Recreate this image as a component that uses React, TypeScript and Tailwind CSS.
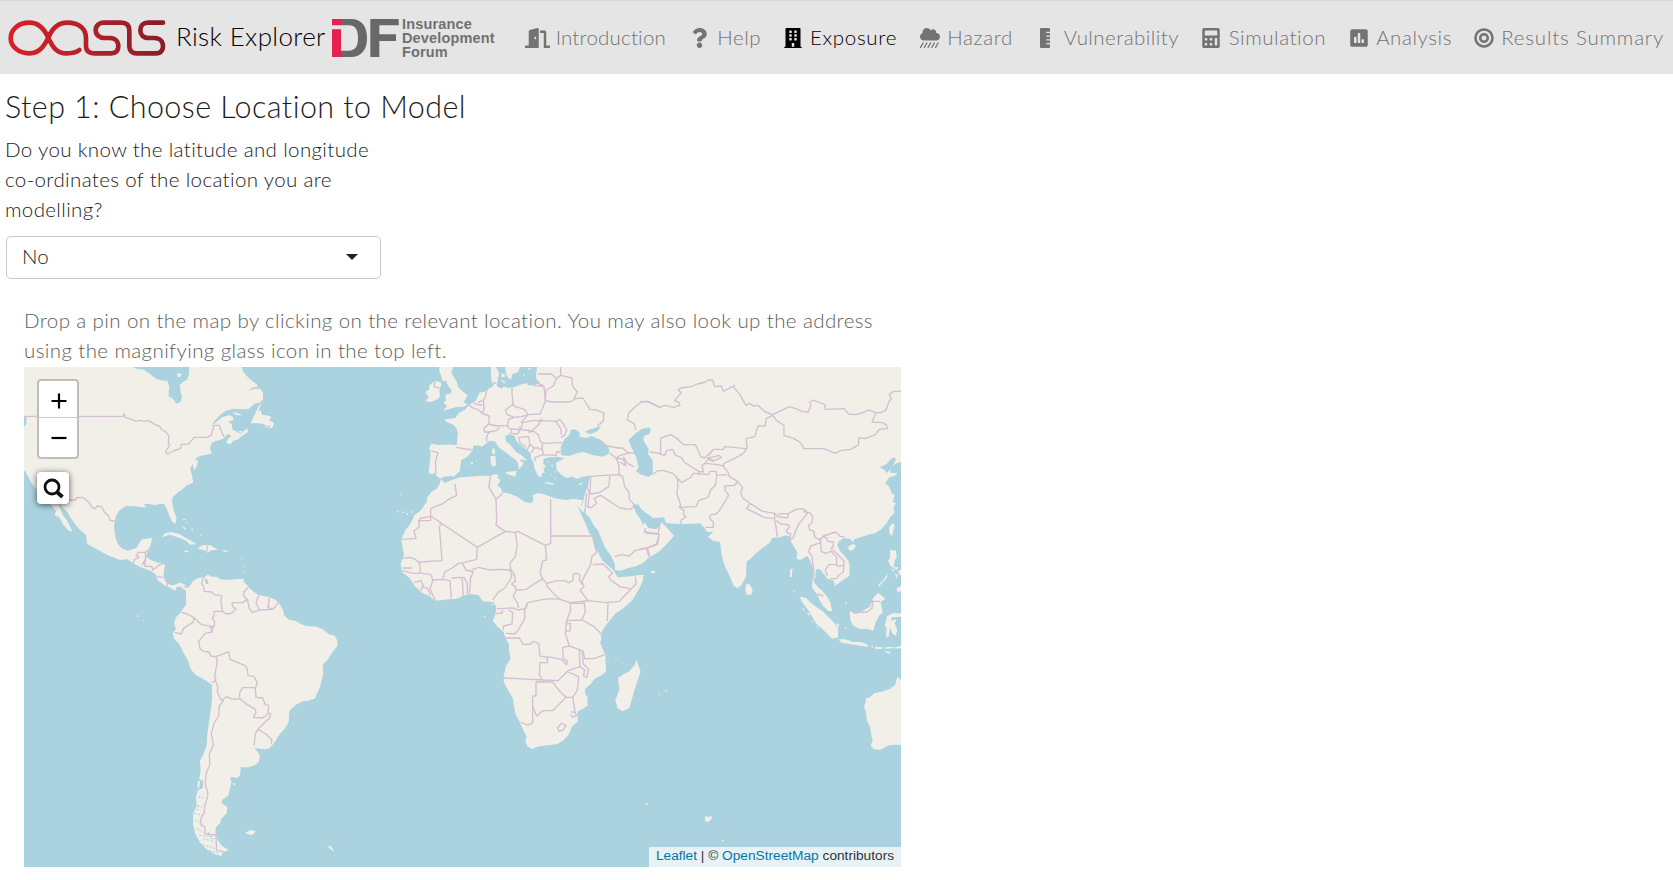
import type { ReactNode } from "react";
import {
  FaBuilding,
  FaBullseye,
  FaCalculator,
  FaCloudShowersHeavy,
  FaDoorOpen,
  FaPoll,
  FaQuestion,
  FaRulerVertical,
} from "react-icons/fa";

function OasisLogo() {
  return (
    <svg className="h-9 w-[158px] shrink-0" viewBox="26 61 474 108" preserveAspectRatio="none" fill="none">
      <defs>
        <linearGradient id="oasis" gradientUnits="userSpaceOnUse" x1="27" y1="150" x2="498" y2="80">
          <stop offset="0" stopColor="#dc2029" />
          <stop offset="0.5" stopColor="#b32029" />
          <stop offset="1" stopColor="#861d26" />
        </linearGradient>
      </defs>
      <path
        d="M240 151C230 159 215 161 202 161C166 161 156 132 147 115C137 92 120 69 90 69C57 69 34 90 34 115C34 140 57 161 90 161C124 161 138 132 148 112C158 88 176 69 204 69C240 69 260 88 260 115V140C260 156 272 161 285 161H335C352 161 357 151 357 140C357 125 347 115 332 115H315C300 115 289 105 289 92C289 78 300 69 312 69H365C382 69 390 78 390 92V140C390 155 400 161 412 161H470C485 161 491 151 491 140C491 125 481 115 466 115H448C432 115 423 105 423 92C423 78 432 69 446 69H491"
        stroke="url(#oasis)"
        strokeWidth="14"
        strokeLinecap="round"
      />
    </svg>
  );
}

function IdfLogo() {
  return (
    <div className="flex items-start">
      <svg className="h-[38px] w-[67px]" viewBox="996 60 201 114">
        <path d="M996 60H1023V79H996ZM996 91H1023V174H996Z" fill="#e8204f" />
        <path
          d="M1023 60H1052C1085 60 1101 82 1101 117C1101 152 1085 174 1052 174H1023V155H1046C1066 155 1074 142 1074 117C1074 92 1066 79 1046 79H1023ZM1111 60H1196V79H1138V106H1188V126H1138V174H1111Z"
          fill="#686868"
        />
      </svg>
      <div className="-mt-px ml-[3px] flex flex-col font-['Liberation_Sans',Arial,sans-serif] text-[14.5px] leading-[13.7px] font-bold tracking-[0.15px] text-[#707070]">
        <span>Insurance</span>
        <span>Development</span>
        <span>Forum</span>
      </div>
    </div>
  );
}

function NavItem({ className, icon, label, active }: { className: string; icon: ReactNode; label: string; active?: boolean }) {
  return (
    <a className={`flex shrink-0 items-center justify-between whitespace-nowrap ${active ? "text-black" : "text-[#737373]"} ${className}`}>
      {icon}
      <span className="pb-[2px] leading-[30px]">{label}</span>
    </a>
  );
}

const land = "#f2efe9";
const water = "#aad3df";

function WorldMap() {
  return (
    <svg className="block h-[500px] w-[877px]" viewBox="24 367 877 500">
      <rect x="24" y="367" width="877" height="500" fill={water} />

      {/* North and Central America */}
      <g transform="translate(20 300) scale(0.33333)">
        <path
          fill={land}
          d="M12 201L338 201L350 207L372 209L382 217L395 226L408 236L422 241L442 243L448 262L446 276L446 290L455 293L462 301L470 311L482 305L486 290L482 276L479 256L488 246L500 240L507 222L507 201L665 201L670 215L680 228L697 243L712 254L712 262L700 262L684 272L706 266L722 266L729 280L729 300L718 308L702 312L686 327L660 328L640 326L617 333L600 345L586 360L572 380L590 365L606 352L628 345L640 352L638 362L625 364L636 374L636 388L652 396L662 402L682 384L684 396L662 410L655 418L640 422L632 433L620 430L620 422L634 406L622 403L612 414L600 420L584 424L574 430L570 446L576 460L562 464L548 466L532 472L525 478L534 482L530 500L522 512L518 492L510 506L516 525L520 548L500 556L488 568L472 578L458 592L456 604L460 628L470 655L466 672L455 663L448 646L438 622L432 612L418 612L405 616L390 612L372 612L378 622L362 622L345 619L318 618L297 632L287 650L282 680L286 710L292 730L304 744L322 752L350 744L358 728L366 718L397 714L392 734L384 752L378 770L388 778L412 788L436 790L432 812L430 832L438 846L450 855L462 856L478 848L492 852L502 862L496 872L484 860L470 860L466 872L452 864L434 856L412 840L408 824L392 812L362 802L340 790L322 778L300 780L262 765L225 745L202 732L198 705L180 690L165 672L150 650L140 632L130 625L115 608L122 628L128 645L140 660L157 694L148 694L130 674L118 652L104 646L108 634L92 612L52 600L50 570L34 548L22 524L12 510Z"
        />
        <path
          fill={land}
          d="M725 308L716 318L702 348L692 370L718 370L740 376L734 384L750 376L748 386L758 382L762 368L748 362L754 350L738 346L726 344L722 330L714 335ZM636 338L652 338L666 346L652 346ZM655 393L670 394L660 400ZM472 220L486 222L480 232L472 230ZM424 712L436 700L454 696L478 702L498 714L530 732L510 734L498 722L480 714L450 704ZM532 746L548 736L572 736L594 750L576 750L562 758L552 750ZM492 752L506 752L506 756L494 757ZM608 750L624 752L620 756L608 754ZM486 676L498 686L494 690ZM500 664L504 668L500 670ZM484 656L498 658L494 661ZM514 684L520 690L516 692ZM540 702L546 708L542 708ZM664 770L668 774L664 776ZM672 794L676 800L672 802ZM668 812L672 814L670 818ZM660 838L672 836L670 842Z"
        />
        <path fill={water} d="M12 350L20 352L19 372L12 380Z" />
        <g fill="none" stroke="#d3bfd0" strokeWidth="4" strokeLinejoin="round">
          <path d="M12 349H310L313 341L315 352L336 359L348 364L362 361L372 364L386 362L404 373L418 378L426 390L436 394L447 408L445 430L450 434L436 456L444 462L460 453L482 445L484 433L505 432L523 412L563 412L574 404L582 376L598 376L604 394L612 410" />
          <path d="M120 600H166L172 592L190 593L208 608L216 623L226 626L232 618L244 619L254 638L264 645L270 660L288 665M340 790L344 778L358 772L348 768L356 757L376 757L384 750M376 757L377 776L366 796M377 778L374 798L396 800L398 810L420 793L436 790M410 830L428 832M440 838L442 858M562 738L560 756M492 862L500 858" />
        </g>
      </g>

      {/* South America */}
      <g transform="translate(20 570) scale(0.33333)">
        <path
          fill={land}
          d="M498 58L506 52L520 32L535 24L550 22L562 10L572 20L590 20L600 28L625 30L645 28L668 26L672 36L684 48L690 56L715 76L745 80L768 90L780 104L790 122L792 136L808 150L825 152L848 164L862 168L890 170L908 178L925 192L945 198L952 212L952 228L936 248L924 268L908 284L910 310L904 334L900 352L884 386L866 392L848 394L828 404L808 422L806 456L794 476L778 494L762 520L746 536L735 538L704 534L712 544L720 558L716 576L704 586L684 592L662 592L660 618L648 624L630 620L634 636L630 656L624 678L608 688L604 698L622 712L620 730L604 746L600 760L588 772L586 790L592 808L606 828L626 840L606 848L604 858L584 852L560 838L542 820L526 792L519 762L520 730L530 708L528 680L534 660L548 655L550 632L538 628L542 600L540 572L550 554L560 526L562 492L568 450L574 410L576 380L576 344L552 328L528 316L512 298L504 272L488 244L478 222L462 206L458 190L468 178L462 160L468 142L480 130L488 118L498 104Z"
        />
        <path fill={land} d="M534 634L540 632L538 654L532 652ZM674 790L692 780L708 784L696 796ZM920 826L934 830L942 842L934 840ZM636 640L646 640L644 647ZM348 136L356 138L354 142ZM368 149L372 150L370 153Z" />
        <path d="M522 700L545 712M522 730L546 736M526 750L548 764M528 774L552 788M538 796L576 800M550 806L584 816M548 824L588 836M568 842L598 850M534 680L550 684M564 786L572 806L586 806M536 706L532 722" fill="none" stroke={water} strokeWidth="3" strokeDasharray="7 4" />
        <path fill={water} d="M557 24L564 32L565 42L558 42L555 34Z" />
        <g fill="none" stroke="#d3bfd0" strokeWidth="4" strokeLinejoin="round">
          <path d="M566 10L550 22L545 40L550 48L553 64L574 66L584 74L606 77L602 92L608 125L620 132L634 130L648 117L638 110L636 98L668 98L682 88L672 80L672 66L684 52M682 88L688 116L698 127L718 120L758 118L764 112L774 98M718 120L708 98L716 76M758 118L744 112L748 82M608 124L582 124L582 138L576 144L584 154L583 168L570 172L578 180L573 186L580 170L545 164L522 143L502 132L484 127M522 143L520 156L490 176L484 192L464 187M578 186L556 190L536 214L540 236L550 244L568 246L572 258L588 260L626 246L630 268L674 286L682 296L684 316L702 320L712 338L706 354L708 382L728 384L736 404L746 406L744 432L728 444L700 442L708 428L706 418L682 404L660 386L638 388L620 380L606 390M588 260L592 276L584 318L588 330L576 338M584 328L594 350L592 366L602 388L610 392L598 408L596 438L582 460L574 490L580 524L568 552L569 586L558 612L556 642L564 674L554 710L552 730L542 746L543 766L554 770L556 792L588 795L590 842L610 844M658 382L660 364L668 353L704 353M744 430L752 430L750 442L714 478L706 492L702 526M714 478L738 492L756 510L754 522" />
        </g>
      </g>

      {/* Southern Africa */}
      <g transform="translate(460 560) scale(0.33333)">
        <path
          fill={land}
          d="M68 90L550 45L548 62L535 90L515 122L490 144L466 160L445 186L432 204L422 222L424 240L420 246L428 268L436 284L438 335L424 346L404 356L390 374L375 386L376 402L383 412L382 438L352 455L354 484L336 500L325 526L308 542L292 552L266 556L240 558L215 567L202 558L196 544L200 530L188 506L178 484L168 466L162 440L158 414L144 390L131 365L132 344L138 318L152 296L146 268L148 256L138 236L130 215L114 200L98 184L106 164L110 140L102 124Z"
        />
        <path fill={land} d="M530 300L536 318L542 336L536 350L520 402L508 444L488 454L472 444L466 420L478 390L474 354L492 342L508 334L524 314ZM574 35L586 36L582 40L574 39ZM72 168L76 168L76 172L72 171ZM94 130L100 132L96 138ZM466 295L471 298L467 299ZM485 305L489 308L485 309ZM616 390L623 392L618 396ZM594 401L601 403L596 406Z" />
      </g>

      {/* Europe, Middle East and North Africa */}
      <g transform="translate(390 360) scale(0.33333)">
        <path
          fill={land}
          d="M441 21L438 44L440 60L450 66L434 76L415 76L410 69L390 74L376 80L358 84L340 80L335 86L320 78L322 68L324 54L328 40L318 21L303 21L303 46L308 80L296 86L290 94L268 98L262 112L256 124L238 134L224 150L206 160L196 174L180 176L166 178L166 184L180 190L192 196L200 206L204 222L200 256L184 254L165 254L146 255L124 251L118 262L122 282L116 340L134 343L150 356L162 350L180 348L192 350L200 342L210 332L212 312L214 300L232 290L246 274L250 258L264 256L276 260L298 243L314 244L326 262L350 280L364 290L378 300L384 312L386 328L396 318L402 308L390 302L394 298L412 304L398 288L378 276L362 256L348 244L346 228L358 222L374 228L380 244L398 260L412 270L422 280L424 298L430 306L434 326L444 348L454 352L456 338L464 340L460 324L470 320L458 310L466 298L482 292L500 290L524 294L508 304L498 308L500 330L514 344L530 354L546 350L562 356L580 350L600 346L596 370L590 388L582 414L575 440L582 458L584 440L588 448L586 460L600 475L612 498L624 510L632 532L646 564L665 590L674 612L675 630L690 632L716 624L740 618L758 610L775 594L792 584L810 572L822 560L835 547L852 527L835 508L815 487L808 500L798 508L775 504L764 486L760 496L748 472L740 462L728 434L745 433L754 448L770 460L790 474L822 472L828 490L870 492L930 490L930 21Z"
        />
        <path
          fill={land}
          d="M148 21L190 21L184 38L192 52L200 64L204 80L222 98L232 104L228 116L220 126L232 134L222 140L196 142L176 148L158 152L172 138L160 128L168 122L166 104L184 100L184 88L176 80L168 62L158 64L154 48L148 34ZM134 64L152 66L154 76L148 86L150 106L146 116L124 126L106 124L116 112L106 96L118 88L118 76ZM345 21L390 21L384 36L368 42L362 60L350 48ZM334 42L344 40L344 52L334 52ZM330 58L348 66L342 70ZM400 40L404 44L400 50ZM412 24L426 26L418 30ZM308 264L314 266L316 280L310 284L306 276ZM302 288L316 288L318 316L308 320L302 306ZM346 336L380 332L376 350L350 342ZM466 366L492 370L490 374L466 370ZM562 374L578 366L574 374ZM240 308L250 306L248 314ZM256 302L262 304L258 306ZM226 316L230 318L226 320ZM30 400L36 402L32 405ZM20 452L26 454L22 458ZM36 454L44 456L38 460ZM48 460L56 458L52 466ZM62 456L70 452L66 460ZM783 634L794 634L792 639L784 639ZM496 352L500 354L496 360ZM474 324L480 326L474 328Z"
        />
        <path
          fill={land}
          d="M152 358L164 369L186 360L210 352L240 350L270 347L300 348L314 343L326 345L322 354L332 360L322 376L334 386L336 397L362 402L382 410L404 426L424 430L430 420L428 406L444 400L460 402L482 410L500 416L530 420L550 416L578 421L574 434L582 456L576 454L562 436L572 460L580 476L598 518L608 530L614 564L624 576L636 600L656 618L670 630L686 656L704 658L730 648L760 644L758 662L745 690L725 722L700 744L676 760L655 786L640 800L320 800L318 740L310 726L278 724L266 706L244 702L222 706L200 716L178 718L135 722L118 708L96 698L74 678L60 655L36 636L32 610L42 584L34 540L46 510L60 494L74 464L92 452L110 425L112 412L124 396L140 386L150 370Z"
        />
        <path
          fill={water}
          d="M542 210L556 208L570 218L568 230L590 234L604 228L634 240L656 262L658 280L640 290L610 286L580 276L560 280L538 288L514 286L512 262L524 236L538 226ZM586 214L602 208L634 198L622 214L604 222L590 220ZM756 206L778 202L783 210L778 222L762 228L760 240L776 268L774 282L788 300L789 342L776 350L754 344L738 334L746 320L738 290L724 262L716 240L734 222ZM304 72L316 66L320 68L306 78Z"
        />
        <path fill={water} d="M460 296L480 292L498 292L496 306L498 330L510 344L496 346L480 334L468 322L462 310Z" />
        <path fill={land} d="M482 314L490 316L486 320ZM472 306L478 304L476 310ZM494 332L498 336L494 338ZM480 342L486 344L482 346Z" />
        <g fill="none" stroke="#d3bfd0" strokeWidth="4" strokeLinejoin="round">
          <path d="M290 94L286 110L280 122L282 148L276 160L298 168L296 192L282 204L284 216L298 216L290 228L290 246M238 136L252 146L264 148L276 160M252 130L276 136M264 128L280 120M366 84L366 104L370 132L346 150L352 164L372 172L394 170L414 164L404 148L376 140L366 132M414 164L450 162L458 144L466 122L462 80L430 76M456 174L450 184L458 182L428 182L398 188L392 210L358 206L352 196L356 178L372 172M296 192L320 198L352 196M298 216L320 212L328 202M392 188L400 180L414 164M450 184L444 196L426 212L400 210L386 202M458 182L498 184L510 178L520 192L530 210L524 226L512 232M498 184L512 206L514 224M366 206L362 220L382 222L390 212M386 232L416 230L420 252L412 268M386 232L390 248L408 262M414 216L432 214L446 226L450 242L458 250L516 248M458 250L456 262L460 284L436 292M420 252L432 264L444 264L458 270M432 264L424 278M460 284L498 286L500 276L512 276M436 290L434 304M466 122L486 126L540 126L556 116L578 114L600 148L620 150L642 160L640 182L622 198M466 120L468 90L490 78L498 58L512 46L546 54L548 80L562 96L552 116M444 42H484L498 54M430 66L460 76M512 21V46" />
          <path d="M122 272L144 278L136 306L138 340L128 344M198 262L246 270M134 66L132 80L148 84M600 350L640 346L688 344L686 314L680 296L660 280M634 254L684 264L698 264L714 280L690 286L680 294M682 294L700 298L708 318L690 306M700 290L712 310L732 320M714 278L736 280M738 210L732 190L712 180L716 160L734 142L756 124L780 126L810 142M602 350L600 402M660 348L656 380L628 398L600 402M590 400L586 438L602 444L620 430L612 416L632 406L690 444L722 448L734 436L718 418L716 396L704 380L698 350L688 344M592 380L598 398L594 440M766 504L764 516L806 522M674 590L694 584L718 588L734 572L772 564L780 590M770 564L802 554L808 522M195 372L200 406L176 418L160 430L122 446V482M302 348L296 380L318 418L338 400M318 418L320 480L318 496L346 514L376 518L384 514L466 556M482 418V550L466 556L470 600L458 602L450 640L458 656L426 676L408 688L380 690M482 528H608M122 468L262 562L346 514M262 562L260 598L220 608L206 610L186 624L164 636L158 658M376 518L382 556L376 590L360 610L362 628L372 640L376 664L364 672L376 680M148 498L156 602L86 606M148 492L156 498M122 482H86L88 500L72 512L78 536L36 538M122 470L92 474L86 488M36 596L60 592L76 598L88 610L92 640L70 640L36 632M38 624L66 624M96 640L124 644L128 664L120 686L126 700L136 722M72 668L92 662L100 676L92 692M100 682L112 684L122 706M128 660L158 658L180 662L184 716M184 654L216 652L220 706M216 608L228 630L250 636L242 652L238 702M220 650L232 670L232 702M244 630L266 622L300 630L330 628L360 630L366 646L360 660L344 684L324 698L308 720M376 680L378 690L370 710L382 728L386 744M458 656L470 670L472 680L496 706L510 718L540 728M510 718L484 716L460 718L414 728L406 746L384 750L368 744L320 746M472 670L500 662L524 662L536 668L548 662L550 642L560 640L570 644L568 660L578 674M608 530L620 578L606 588L602 614L588 640L576 664L582 680L570 690L594 722L650 728L688 724L738 672L736 650M608 614L640 612L668 640L656 650L662 660L690 680L720 686M540 728L578 724L594 722M654 728L652 784" />
        </g>
      </g>

      {/* Central and southern African borders */}
      <g transform="translate(460 560) scale(0.33333)">
        <g fill="none" stroke="#d3bfd0" strokeWidth="4" strokeLinejoin="round">
          <path d="M128 150L126 160L108 160M146 150L158 158L156 192L130 198L130 210M202 130L194 150V176L176 208L164 222L138 220M138 234H178L190 254L212 252L220 244L236 250L240 288L262 292L262 308H240L238 344L248 360M330 130L332 150L320 182L316 220L328 258M330 130L372 130M372 122L376 154L366 180L320 182M366 180L402 200L422 220M318 192L332 190L330 212L318 214M328 258L308 262L310 296L322 304L320 314L304 298L262 290M328 258L356 268L370 274L374 296L402 296L434 284M358 270L360 320L324 332L294 362L248 360L132 354M366 276L370 312L386 328L380 352L370 348L374 330L360 320M324 336L356 350L352 390L338 412L318 412L298 392L276 364M228 366H276M228 366V408H218V488L204 496L182 486M218 440L230 468L248 452L278 452L318 412M338 412L346 460M334 456L344 456L350 466L338 472L332 464M292 504L304 490L318 496L310 510L298 514L292 504" />
        </g>
      </g>

      {/* South and East Asia */}
      <g transform="translate(640 360) scale(0.33333)">
        <path
          fill={land}
          d="M100 21H784V306L766 311L752 324L750 338L772 340L768 346L748 352L736 370L748 380L754 398L764 406L758 426L768 430L760 444L764 458L750 472L740 490L724 508L704 520L684 524L662 532L642 538L640 548L632 538L612 534L598 542L592 556L600 572L614 588L626 604L629 620L628 648L612 658L596 670L584 678L582 662L562 656L550 640L540 628L528 628L526 650L520 664L534 682L548 694L560 708L570 726L577 754L564 752L550 738L540 722L532 704L516 682L518 650L520 630L512 604L502 588L480 600L470 596L472 576L462 560L452 544L448 528L438 526L420 532L396 534L390 548L370 562L348 580L330 598L320 604L318 650L304 676L292 685L280 676L270 650L256 622L246 590L240 546L220 542L204 530L220 516L202 516L192 502L180 490L100 490Z"
        />
        <path fill={water} d="M720 322L740 312L752 298L762 292L768 298L760 314L752 326L740 340L734 330Z" />
        <path
          fill={land}
          d="M320 670L330 674L338 690L334 704L320 704L316 688ZM624 560L638 552L648 556L640 570L628 572ZM748 502L758 490L764 496L756 528L748 520ZM750 570L768 572L770 590L764 602L762 622L776 622L770 630L752 618L744 602L750 594ZM756 624L764 632L758 634ZM766 640L774 646L768 656ZM774 632L784 630L784 646L778 644ZM768 688L784 676V690L776 698ZM744 640L740 654L716 680L714 676L730 660ZM480 712L496 714L516 732L544 752L558 768L574 790L592 804L594 832L576 836L548 808L528 790L506 752L488 728ZM0 648L8 644L6 664L0 680ZM34 634L44 636L42 639L34 639ZM452 628L456 628L456 652L450 650ZM616 726L622 728L618 732ZM460 690L464 694L460 696Z"
        />
        <g fill="none" stroke="#d3bfd0" strokeWidth="4" strokeLinejoin="round">
          <path d="M0 126L22 124L58 142L76 136L100 142L120 136L116 126L104 122L124 98L114 90L122 84L154 80L172 72L198 66L202 60H218L224 80L244 78L250 94L284 76L280 80L300 104L318 136L328 130L340 138L354 136L376 156L398 164L448 140L468 146L486 154L504 156L512 138L510 126L520 120L554 134L556 148L612 146L626 162L648 164L674 156L686 150L708 158L722 158L738 150L748 122L754 118L748 102L762 94H784" />
          <path d="M398 166L410 182L432 196V226L462 236L482 248L492 266L552 266L586 280L602 272L632 268L656 254V234L676 236L706 224L718 208L742 206L740 196L728 188L696 186L708 158M398 166L378 176L376 198L354 198L344 230L318 236L322 262L310 280L294 290L282 296L252 310L250 320L264 336L268 350L292 364L308 382L302 398L308 414L330 430L320 446L372 472L406 476M62 284V234L92 224L112 236L130 254L166 254L174 270L182 290L194 294L222 268H250L254 260L320 266M30 276L48 278L74 286L80 272L98 268L106 286L124 292L132 306L176 334L178 342L160 340L150 354L124 368L114 356L98 340L72 332L54 332L40 342M112 354L114 378L110 400L122 434L118 442L168 440L176 422L204 412L212 390L226 376L230 346L262 344M178 342L206 344L210 334L228 334L230 346M176 334L190 336L186 316L196 310L234 314L250 318M194 310L204 298L222 304M202 294L226 290L236 286L244 292L224 302L202 296M218 270L206 286M292 366L284 376L254 378L256 392L266 406L238 452L228 462L212 464L208 474L220 486V502H196M118 442L132 452L130 464L138 470L124 480L122 492M330 430L368 454L404 460V482L408 500L412 530M404 460L414 470L442 474L446 460L414 462M408 482L424 492L446 494L448 502L438 512L444 520L452 520L450 544M446 460L468 448L490 446L494 456L510 458L518 470L516 488L506 496L508 508L522 514L524 532L540 540L550 528L588 516L602 530H614M494 448L502 460L478 490L466 514L460 534L450 540M540 534L542 548L512 558L506 574L516 590L520 620L522 640L518 660M542 550L544 574L556 580L574 574L590 592V614H566L556 630L562 648M548 530L560 534L564 544L580 546V558L574 566L598 588L612 604L610 636L596 646L590 656H570M590 618L610 616M532 702L550 708M14 510L20 520L54 522L60 490M0 568L20 564L50 552L56 528M20 566L26 590" />
        </g>
      </g>

      {/* Indonesia and Australia */}
      <g transform="translate(780 540) scale(0.33333)">
        <path
          fill={land}
          d="M60 171L78 174L92 188L112 204L128 214L146 232L158 244L174 262L174 292L160 294L142 276L118 254L100 224L82 202L66 184ZM174 298L196 298L220 306L244 306L266 316L260 320L222 314L186 308ZM210 214L222 218L238 218L252 210L270 200L278 176L294 158L316 176L302 186L308 218L298 226L286 250L280 272L262 266L240 268L218 256L210 236ZM322 228L338 220H364V230L336 232L332 242L350 238L344 250L352 272L346 288L336 278L330 262L326 290L318 290L320 262L314 258ZM66 204L74 208L70 212ZM82 216L90 222L86 228ZM96 240L102 246L98 248ZM110 256L116 262L112 266ZM168 250L178 252L176 262ZM194 260L200 262L196 266ZM196 186L200 188L198 192ZM272 320L280 318L278 324ZM284 320L308 322L306 327H286ZM314 322L340 320V325L314 326ZM344 322L364 318V324L346 326ZM312 332L330 336L332 342L320 338ZM42 154L46 156L42 158ZM32 88L38 84L34 108L30 104Z"
        />
        <path fill={land} d="M364 420L354 410L348 422L346 434L330 446L310 454L284 460L266 474L258 474L256 490L252 498L258 516L260 540L270 560L274 586L278 600L272 618L282 628L300 630L322 618L340 614L364 615Z" />
        <path d="M216 214L224 220L242 216L262 216L276 204L278 186L264 184M276 184H300M274 178L280 188" fill="none" stroke="#d3bfd0" strokeWidth="4" strokeLinejoin="round" />
      </g>

      <path fill={land} d="M705 816L708 817L712 816L711 820L708 822L705 821ZM645 803.5L648 803.5L648 804.5L645 804.5ZM721.5 840L723.5 840L724 842Z" />
    </svg>
  );
}

function MapControls() {
  return (
    <div className="absolute top-[12px] left-[13px] flex flex-col items-start gap-[13px]">
      <div className="flex h-[80px] w-[42px] flex-col rounded-[4px] border-2 border-[#c1beba] bg-white text-black">
        <button className="flex h-[37px] items-center justify-center border-b border-[#ccc] pt-[3px] pl-[2px]" aria-label="Zoom in">
          <svg className="size-4" viewBox="0 0 16 16">
            <path d="M0.5 8H15.5M8 0.5V15.5" stroke="black" strokeWidth="2.2" />
          </svg>
        </button>
        <button className="flex h-[39px] items-center justify-center pl-[2px]" aria-label="Zoom out">
          <svg className="size-4" viewBox="0 0 16 16">
            <path d="M0.5 8H15.5" stroke="black" strokeWidth="2.2" />
          </svg>
        </button>
      </div>
      <button className="flex size-8 items-center justify-center rounded-[4px] bg-white shadow-[0_1px_6px_rgba(0,0,0,0.65)]" aria-label="Search">
        <svg className="size-[21px]" viewBox="0 0 21 21" fill="none" stroke="#111">
          <circle cx="9" cy="9" r="7" strokeWidth="2.8" />
          <path d="M14 14L19.5 19" strokeWidth="3.8" />
        </svg>
      </button>
    </div>
  );
}

export default function App() {
  return (
    <div className="h-[880px] w-[1673px] overflow-hidden bg-white font-[Lato,sans-serif] text-[20.5px] font-light text-[#1c1c1c]">
      <header className="flex h-[74px] items-center border-t border-[#d3d9de] bg-[#e5e5e5] pl-2">
        <OasisLogo />
        <span className="ml-[10px] w-[150px] pb-[4px] text-[26px] leading-9 tracking-[0.36px] whitespace-nowrap text-black">Risk Explorer</span>
        <div className="ml-[6px] w-[165px] pt-1">
          <IdfLogo />
        </div>
        <nav className="ml-[28px] flex items-center">
          <NavItem className="w-[141px] tracking-[0.2px]" icon={<FaDoorOpen className="h-5 w-[25px]" />} label="Introduction" />
          <NavItem className="ml-[26px] w-[69px] tracking-[0.5px]" icon={<FaQuestion className="h-5 w-[15px]" />} label="Help" />
          <NavItem className="ml-[23px] w-[113px] tracking-[0.68px]" icon={<FaBuilding className="h-5 w-[18px]" />} label="Exposure" active />
          <NavItem className="ml-[23px] w-[93px] tracking-[0.6px]" icon={<FaCloudShowersHeavy className="size-5" />} label="Hazard" />
          <NavItem className="ml-[27px] w-[139px] tracking-[0.45px]" icon={<FaRulerVertical className="h-5 w-[10px]" />} label="Vulnerability" />
          <NavItem className="ml-[23px] w-[124px] tracking-[0.55px]" icon={<FaCalculator className="h-5 w-[18px]" />} label="Simulation" />
          <NavItem className="ml-[24px] w-[102px] tracking-[0.58px]" icon={<FaPoll className="h-5 w-[18px]" />} label="Analysis" />
          <NavItem className="ml-[22px] w-[190px] tracking-[0.8px]" icon={<FaBullseye className="size-5" />} label="Results Summary" />
        </nav>
      </header>
      <main className="flex flex-col items-start pt-[14px] pl-[6px]">
        <h1 className="-ml-px text-[30.5px] leading-9 tracking-[0.42px] whitespace-nowrap">Step 1: Choose Location to Model</h1>
        <p className="mt-[10px] -ml-px flex flex-col leading-[30px] tracking-[0.36px] whitespace-nowrap">
          <span>Do you know the latitude and longitude</span>
          <span>co-ordinates of the location you are</span>
          <span>modelling?</span>
        </p>
        <div className="mt-[12px] flex h-[43px] w-[375px] items-center justify-between rounded-[5px] border border-[#c8c8c8] pr-[22px] pl-[15px]">
          <span className="pb-[2px]">No</span>
          <svg className="mb-px h-[6px] w-[12px]" viewBox="0 0 12 6">
            <path d="M0 0H12L6 6Z" fill="#222" />
          </svg>
        </div>
        <section className="mt-[26px] ml-[18px]">
          <p className="mb-[2px] flex flex-col leading-[30px] tracking-[0.4px] whitespace-nowrap text-[#5e5e5e]">
            <span>Drop a pin on the map by clicking on the relevant location. You may also look up the address</span>
            <span>using the magnifying glass icon in the top left.</span>
          </p>
          <div className="relative h-[500px] w-[877px]">
            <WorldMap />
            <MapControls />
            <div className="absolute right-0 bottom-0 flex h-5 w-[252px] items-center justify-center bg-white/70 pb-[2px] font-['Liberation_Sans',Arial,sans-serif] text-[13.7px] font-normal whitespace-pre text-[#333]">
              <a className="text-[#0078a8]">Leaflet</a> | © <a className="text-[#0078a8]">OpenStreetMap</a> contributors
            </div>
          </div>
        </section>
      </main>
    </div>
  );
}
